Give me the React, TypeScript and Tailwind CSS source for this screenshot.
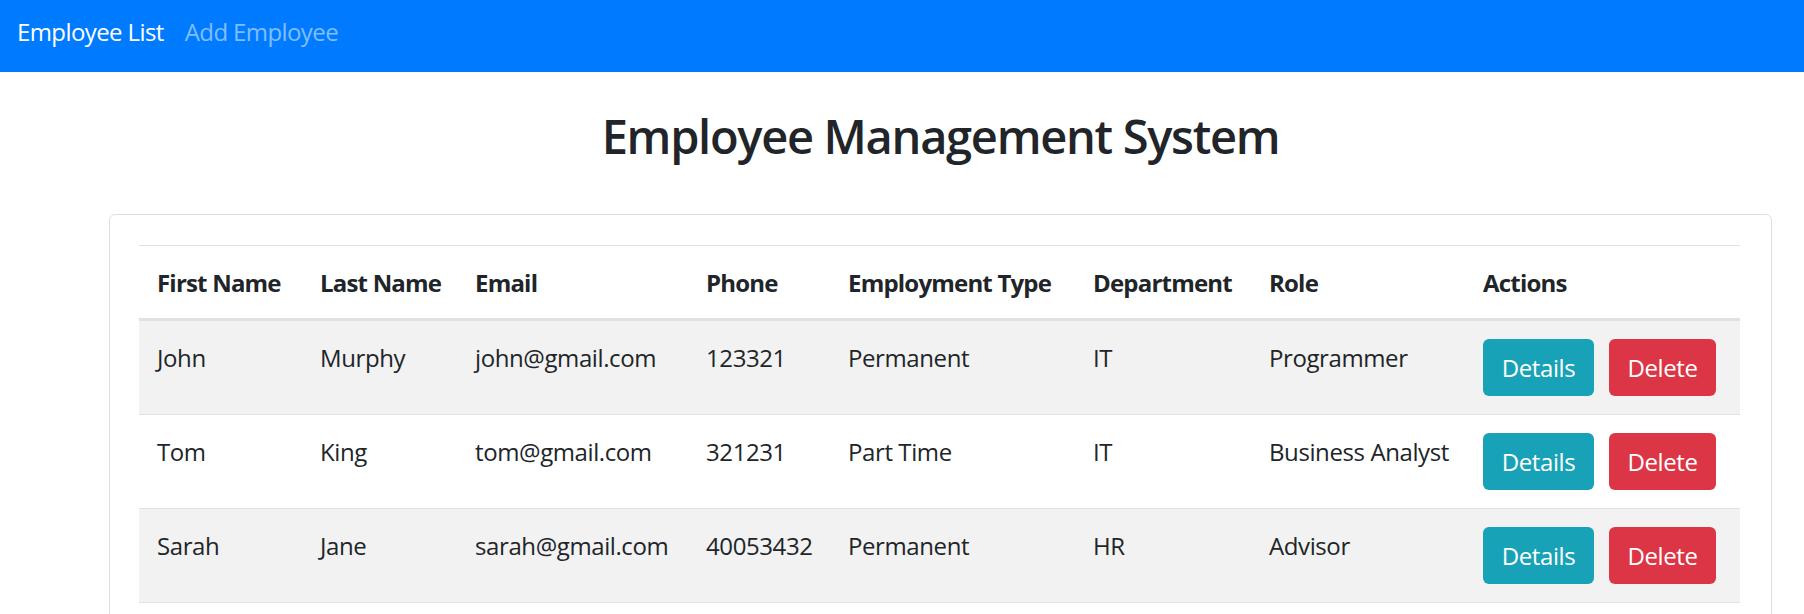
import React from "react";

const rows = [
  { first: "John", last: "Murphy", email: "john@gmail.com", phone: "123321", type: "Permanent", dept: "IT", role: "Programmer" },
  { first: "Tom", last: "King", email: "tom@gmail.com", phone: "321231", type: "Part Time", dept: "IT", role: "Business Analyst" },
  { first: "Sarah", last: "Jane", email: "sarah@gmail.com", phone: "40053432", type: "Permanent", dept: "HR", role: "Advisor" },
];

const cols = [
  { label: "First Name", w: "w-[163px]" },
  { label: "Last Name", w: "w-[155px]" },
  { label: "Email", w: "w-[231px]" },
  { label: "Phone", w: "w-[142px]" },
  { label: "Employment Type", w: "w-[245px]" },
  { label: "Department", w: "w-[176px]" },
  { label: "Role", w: "w-[214px]" },
  { label: "Actions", w: "w-[275px]" },
];

export default function App() {
  return (
    <div className="min-h-[614px] bg-white text-[#212529] font-['Open_Sans','Noto_Sans',sans-serif]">
      <nav className="h-[72px] bg-[#007bff] flex items-start pt-[14px] pl-[17px] gap-[21px] text-[24px] leading-[36px] tracking-[-0.6px]">
        <span className="text-white">Employee List</span>
        <span className="text-[#80bdff]">Add Employee</span>
      </nav>
      <div className="ml-[109px] mr-[32px]">
        <h2 className="mt-[36px] text-center text-[47px] leading-[1.2] font-semibold tracking-[-1.3px]">
          Employee Management System
        </h2>
        <div className="mt-[50px] border border-[#dfdfdf] rounded-[6px] pt-[30px] pl-[29px] pr-[31px] pb-[30px]">
          <table className="w-[1601px] table-fixed border-collapse text-[24px] leading-[36px] tracking-[-0.4px] whitespace-nowrap">
            <thead>
              <tr>
                {cols.map((c) => (
                  <th
                    key={c.label}
                    className={`${c.w} text-left font-bold align-bottom tracking-[-0.8px] px-[18px] pt-[19px] pb-[17px] border-t border-t-[#dee2e6] border-b-[3px] border-b-[#dee2e6]`}
                  >
                    {c.label}
                  </th>
                ))}
              </tr>
            </thead>
            <tbody>
              {rows.map((r, i) => (
                <tr key={r.first} className={i % 2 === 0 ? "bg-[#f2f2f2]" : "bg-white"}>
                  {[r.first, r.last, r.email, r.phone, r.type, r.dept, r.role].map((v, j) => (
                    <td key={j} className="align-top px-[18px] pt-[19px] pb-[17px] border-b border-b-[#dee2e6]">
                      {v}
                    </td>
                  ))}
                  <td className="align-top px-[18px] py-[18px] border-b border-b-[#dee2e6]">
                    <div className="flex gap-[15px]">
                      <button className="h-[57px] w-[111px] rounded-[6px] bg-[#17a2b8] text-white text-[24px] leading-[36px]">
                        Details
                      </button>
                      <button className="h-[57px] w-[107px] rounded-[6px] bg-[#dc3545] text-white text-[24px] leading-[36px]">
                        Delete
                      </button>
                    </div>
                  </td>
                </tr>
              ))}
            </tbody>
          </table>
        </div>
      </div>
    </div>
  );
}
